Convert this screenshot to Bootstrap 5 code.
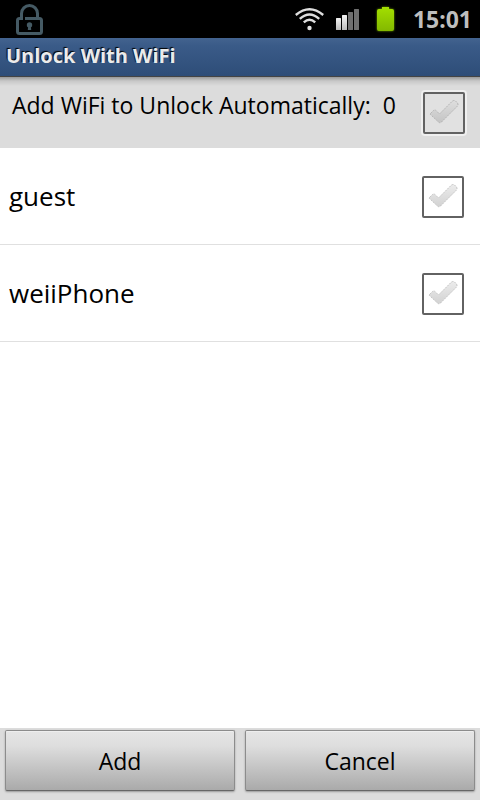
<!DOCTYPE html>
<html lang="en">
<head>
<meta charset="utf-8">
<meta name="viewport" content="width=device-width, initial-scale=1">
<title>Unlock With WiFi</title>
<link href="https://cdn.jsdelivr.net/npm/bootstrap@5.3.0/dist/css/bootstrap.min.css" rel="stylesheet">
<style>
body { font-family: "Open Sans", "Noto Sans", sans-serif; color: #000; background: #fff; }
.status-bar { height: 38px; background: #000; padding: 0 8px 0 15px; }
.clock { font-family: "Noto Sans", sans-serif; font-size: 23px; line-height: 38px; font-weight: 700; color: #bebebe; }
.title-bar { height: 39px; padding: 0 6px; background: linear-gradient(#43638f, #3a5b88 20%, #2e4d78); border-bottom: 1px solid #444; }
.title-bar h1 { font-size: 20px; line-height: 36px; font-weight: 700; color: #ebebeb; text-shadow: -1px -1px 1px #000; }
.summary { height: 71px; padding: 0 15px 0 12px; background: linear-gradient(#999, #c8c8c8 4px, #dcdcdc 9px); }
.summary label { font-size: 23px; line-height: 56px; white-space: pre; }
.wifi-row { height: 97px; padding: 2px 16px 0 9px; border-bottom: 1px solid #e0e0e0; }
.wifi-row label { font-size: 26px; line-height: 92px; padding-bottom: 2px; }
.tick-box.form-check-input {
  width: 42px; height: 42px; margin: 0; border: 2px solid #626262; border-radius: 2px; background-color: #fff;
  background-image: url("data:image/svg+xml,%3Csvg xmlns='http://www.w3.org/2000/svg' viewBox='0 0 38 38'%3E%3Cdefs%3E%3ClinearGradient id='g' x2='0' y2='1'%3E%3Cstop stop-color='%23ececec'/%3E%3Cstop offset='1' stop-color='%23d2d2d2'/%3E%3C/linearGradient%3E%3C/defs%3E%3Cpath d='M5.500 19.500 8.500 16.500Q10 15.500 11 16.500L14.500 20 27.500 7Q29 6 30.500 7L32.500 9Q33.500 10.500 32.500 12L16.500 28Q15 29.500 13.500 28L6 21Q5 20.500 5.500 19.500Z' fill='url(%23g)' stroke='%23c4c4c4' stroke-width='1' stroke-dasharray='2 1'/%3E%3C/svg%3E");
  background-size: 38px 38px; background-position: center; background-repeat: no-repeat;
}
.summary .tick-box.form-check-input {
  margin-top: 15px; background-color: #e1e1e1; box-shadow: 0 0 0 2px #efefef;
  background-image: url("data:image/svg+xml,%3Csvg xmlns='http://www.w3.org/2000/svg' viewBox='0 0 38 38'%3E%3Cdefs%3E%3ClinearGradient id='g' x2='0' y2='1'%3E%3Cstop stop-color='%23dedede'/%3E%3Cstop offset='1' stop-color='%23c4c4c4'/%3E%3C/linearGradient%3E%3C/defs%3E%3Cpath d='M5.500 19.500 8.500 16.500Q10 15.500 11 16.500L14.500 20 27.500 7Q29 6 30.500 7L32.500 9Q33.500 10.500 32.500 12L16.500 28Q15 29.500 13.500 28L6 21Q5 20.500 5.500 19.500Z' fill='url(%23g)' stroke='%23b4b4b4' stroke-width='1' stroke-dasharray='2 1'/%3E%3C/svg%3E");
}
.action-bar { height: 72px; padding: 2px 5px 9px; gap: 10px; background: #dcdcdc; }
.action-bar .btn {
  --bs-btn-color: #000; font-size: 23px; line-height: 32px; border: 1px solid #8c8c8c; border-bottom-color: #666; border-radius: 2px;
  background: linear-gradient(#e5e5e5, #dedede 25%, #aaa); box-shadow: 0 1px 2px #999, inset 0 1px 0 #eee;
}
</style>
</head>
<body>
<div class="d-flex flex-column min-vh-100">
  <header>
    <div class="status-bar d-flex align-items-center justify-content-between">
      <svg width="30" height="38" viewBox="0 0 30 38" fill="none" stroke="#455a64" stroke-width="3" aria-hidden="true">
        <path d="M10 18.500H24.500Q26.500 18.500 26.500 20.500V31.500Q26.500 33.500 24.500 33.500H4.500Q2.500 33.500 2.500 31.500V20.500Q2.500 18.500 4.500 18.500H6.500V13.500a8 8 0 0 1 16 0V18"/>
        <circle cx="14.500" cy="25" r="2.700" fill="#455a64" stroke="none"/>
        <path d="M13.300 25h2.400l.5 5h-3.400z" fill="#455a64" stroke="none"/>
      </svg>
      <div class="d-flex align-items-center">
        <svg width="118" height="38" viewBox="0 0 118 38" aria-hidden="true">
          <defs>
            <linearGradient id="cell" x2="0" y2="1"><stop stop-color="#a3df00"/><stop offset="1" stop-color="#83b800"/></linearGradient>
            <linearGradient id="bars" x2="0" y2="1"><stop stop-color="#f4f4f4"/><stop offset="1" stop-color="#bbb"/></linearGradient>
            <filter id="glow" x="-30%" y="-30%" width="160%" height="160%"><feGaussianBlur stdDeviation="1"/></filter>
          </defs>
          <g fill="none" stroke="#dedede" stroke-width="2.400">
            <path d="M.8 15Q14.500 3.500 28.200 15"/>
            <path d="M4.800 18.800Q14.500 10 24.200 18.800"/>
            <path d="M8.800 22.300Q14.500 17 20.200 22.300"/>
          </g>
          <circle cx="14.500" cy="28" r="2.200" fill="#e4e4e4"/>
          <rect x="41" y="18" width="5" height="12" rx=".5" fill="url(#bars)"/>
          <rect x="47" y="15" width="5" height="15" rx=".5" fill="url(#bars)"/>
          <rect x="53" y="12" width="5" height="18" rx=".5" fill="#707070"/>
          <rect x="59" y="9" width="5" height="21" rx=".5" fill="#707070"/>
          <path d="M84 9h3V7h7v2h3q2 0 2 2v18q0 2-2 2H84q-2 0-2-2V11q0-2 2-2z" fill="#6c9a00" filter="url(#glow)"/>
          <path d="M84 9h3V7h7v2h3q2 0 2 2v18q0 2-2 2H84q-2 0-2-2V11q0-2 2-2z" fill="url(#cell)"/>
        </svg>
        <time class="clock" datetime="15:01">15:01</time>
      </div>
    </div>
    <div class="title-bar"><h1 class="m-0">Unlock With WiFi</h1></div>
  </header>
  <main class="flex-grow-1">
    <div class="summary d-flex align-items-start justify-content-between">
      <label for="all">Add WiFi to Unlock Automatically:  0</label>
      <input class="tick-box form-check-input flex-shrink-0" type="checkbox" id="all">
    </div>
    <div class="wifi-row d-flex align-items-center justify-content-between">
      <label class="flex-grow-1" for="guest">guest</label>
      <input class="tick-box form-check-input flex-shrink-0" type="checkbox" id="guest">
    </div>
    <div class="wifi-row d-flex align-items-center justify-content-between">
      <label class="flex-grow-1" for="weii">weiiPhone</label>
      <input class="tick-box form-check-input flex-shrink-0" type="checkbox" id="weii">
    </div>
  </main>
  <footer class="action-bar d-flex">
    <button type="button" class="btn flex-fill w-50">Add</button>
    <button type="button" class="btn flex-fill w-50">Cancel</button>
  </footer>
</div>
<script src="https://cdn.jsdelivr.net/npm/bootstrap@5.3.0/dist/js/bootstrap.bundle.min.js"></script>
</body>
</html>
